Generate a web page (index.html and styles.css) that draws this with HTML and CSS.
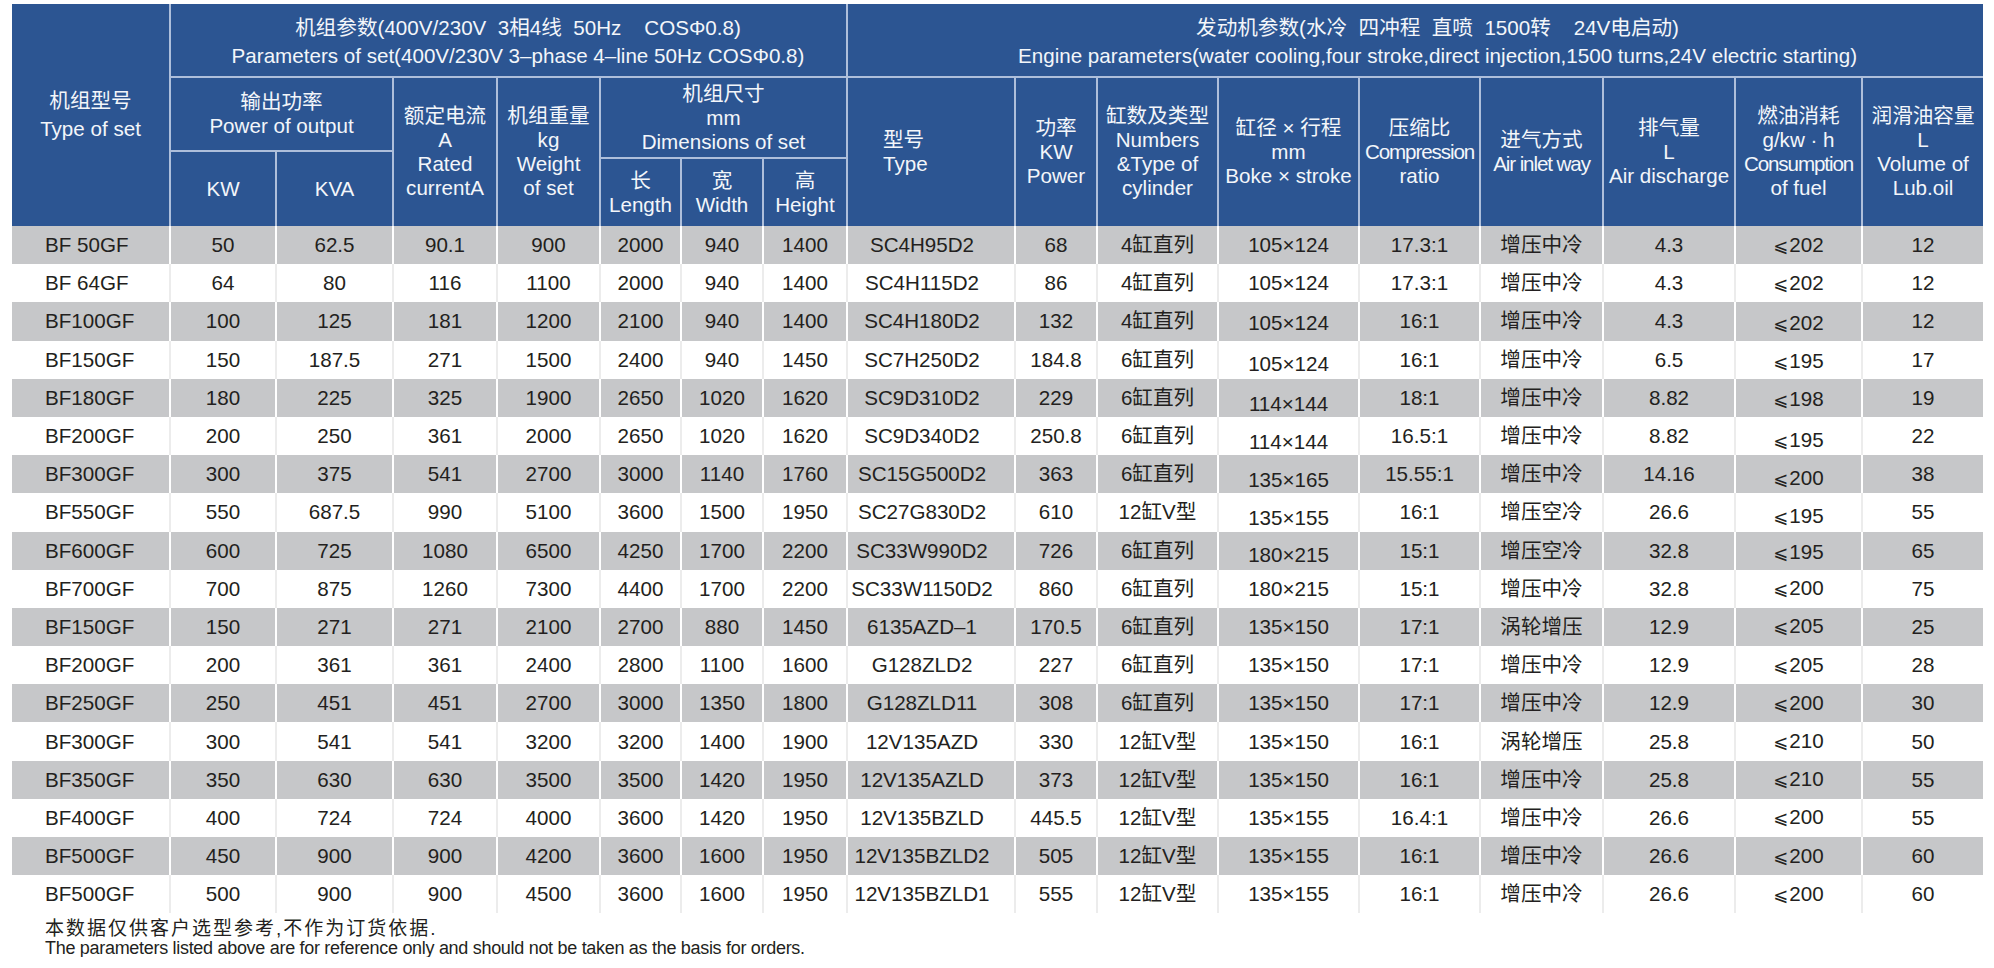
FILE: index.html
```html
<!DOCTYPE html>
<html lang="zh-CN">
<head>
<meta charset="utf-8">
<title>机组参数表</title>
<link rel="stylesheet" href="styles.css">
</head>
<body>
<div class="page">
<table class="spec">
<colgroup>
<col class="col-model"><col class="col-kw"><col class="col-kva"><col class="col-cur"><col class="col-wt"><col class="col-len"><col class="col-wid"><col class="col-hgt"><col class="col-eng"><col class="col-pow"><col class="col-cyl"><col class="col-bore"><col class="col-comp"><col class="col-air"><col class="col-disp"><col class="col-fuel"><col class="col-oil">
</colgroup>
<thead>
<tr class="h1">
<th rowspan="4" class="first">机组型号<br>Type of set</th>
<th colspan="7" class="group group-set">机组参数(400V/230V&nbsp; 3相4线&nbsp; 50Hz&nbsp;&nbsp;&nbsp; COSΦ0.8)<br>Parameters of set(400V/230V 3–phase 4–line 50Hz COSΦ0.8)</th>
<th colspan="9" class="group group-engine">发动机参数(水冷&nbsp; 四冲程&nbsp; 直喷&nbsp; 1500转&nbsp;&nbsp;&nbsp; 24V电启动)<br>Engine parameters(water cooling,four stroke,direct injection,1500 turns,24V electric starting)</th>
</tr>
<tr class="h2">
<th colspan="2">输出功率<br>Power of output</th>
<th rowspan="3">额定电流<br>A<br>Rated<br>currentA</th>
<th rowspan="3">机组重量<br>kg<br>Weight<br>of set</th>
<th colspan="3" rowspan="2">机组尺寸<br>mm<br>Dimensions of set</th>
<th rowspan="3" class="type">型号<br>Type</th>
<th rowspan="3">功率<br>KW<br>Power</th>
<th rowspan="3">缸数及类型<br>Numbers<br>&amp;Type of<br>cylinder</th>
<th rowspan="3">缸径 × 行程<br>mm<br>Boke × stroke</th>
<th rowspan="3">压缩比<br><span class="tight">Compression</span><br>ratio</th>
<th rowspan="3">进气方式<br><span class="tight">Air inlet way</span></th>
<th rowspan="3">排气量<br>L<br>Air discharge</th>
<th rowspan="3">燃油消耗<br>g/kw · h<br><span class="tight">Consumption</span><br>of fuel</th>
<th rowspan="3">润滑油容量<br>L<br>Volume of<br>Lub.oil</th>
</tr>
<tr class="h3">
<th rowspan="2">KW</th>
<th rowspan="2">KVA</th>
</tr>
<tr class="h4">
<th>长<br>Length</th>
<th>宽<br>Width</th>
<th>高<br>Height</th>
</tr>
</thead>
<tbody>
<tr><td>BF 50GF</td><td>50</td><td>62.5</td><td>90.1</td><td>900</td><td>2000</td><td>940</td><td>1400</td><td class="eng">SC4H95D2</td><td>68</td><td>4缸直列</td><td>105×124</td><td>17.3:1</td><td>增压中冷</td><td>4.3</td><td><span class="le">⩽</span>202</td><td>12</td></tr>
<tr><td>BF 64GF</td><td>64</td><td>80</td><td>116</td><td>1100</td><td>2000</td><td>940</td><td>1400</td><td class="eng">SC4H115D2</td><td>86</td><td>4缸直列</td><td>105×124</td><td>17.3:1</td><td>增压中冷</td><td>4.3</td><td><span class="le">⩽</span>202</td><td>12</td></tr>
<tr><td>BF100GF</td><td>100</td><td>125</td><td>181</td><td>1200</td><td>2100</td><td>940</td><td>1400</td><td class="eng">SC4H180D2</td><td>132</td><td>4缸直列</td><td class="dn1">105×124</td><td>16:1</td><td>增压中冷</td><td>4.3</td><td class="dn1"><span class="le">⩽</span>202</td><td>12</td></tr>
<tr><td>BF150GF</td><td>150</td><td>187.5</td><td>271</td><td>1500</td><td>2400</td><td>940</td><td>1450</td><td class="eng">SC7H250D2</td><td>184.8</td><td>6缸直列</td><td class="dn2">105×124</td><td>16:1</td><td>增压中冷</td><td>6.5</td><td class="dn1"><span class="le">⩽</span>195</td><td>17</td></tr>
<tr><td>BF180GF</td><td>180</td><td>225</td><td>325</td><td>1900</td><td>2650</td><td>1020</td><td>1620</td><td class="eng">SC9D310D2</td><td>229</td><td>6缸直列</td><td class="dn3">114×144</td><td>18:1</td><td>增压中冷</td><td>8.82</td><td class="dn1"><span class="le">⩽</span>198</td><td>19</td></tr>
<tr><td>BF200GF</td><td>200</td><td>250</td><td>361</td><td>2000</td><td>2650</td><td>1020</td><td>1620</td><td class="eng">SC9D340D2</td><td>250.8</td><td>6缸直列</td><td class="dn3">114×144</td><td>16.5:1</td><td>增压中冷</td><td>8.82</td><td class="dn2"><span class="le">⩽</span>195</td><td>22</td></tr>
<tr><td>BF300GF</td><td>300</td><td>375</td><td>541</td><td>2700</td><td>3000</td><td>1140</td><td>1760</td><td class="eng">SC15G500D2</td><td>363</td><td>6缸直列</td><td class="dn3">135×165</td><td>15.55:1</td><td>增压中冷</td><td>14.16</td><td class="dn2"><span class="le">⩽</span>200</td><td>38</td></tr>
<tr><td>BF550GF</td><td>550</td><td>687.5</td><td>990</td><td>5100</td><td>3600</td><td>1500</td><td>1950</td><td class="eng">SC27G830D2</td><td>610</td><td>12缸V型</td><td class="dn3">135×155</td><td>16:1</td><td>增压空冷</td><td>26.6</td><td class="dn2"><span class="le">⩽</span>195</td><td>55</td></tr>
<tr><td>BF600GF</td><td>600</td><td>725</td><td>1080</td><td>6500</td><td>4250</td><td>1700</td><td>2200</td><td class="eng">SC33W990D2</td><td>726</td><td>6缸直列</td><td class="dn2">180×215</td><td>15:1</td><td>增压空冷</td><td>32.8</td><td class="dn1"><span class="le">⩽</span>195</td><td>65</td></tr>
<tr><td>BF700GF</td><td>700</td><td>875</td><td>1260</td><td>7300</td><td>4400</td><td>1700</td><td>2200</td><td class="eng">SC33W1150D2</td><td>860</td><td>6缸直列</td><td>180×215</td><td>15:1</td><td>增压中冷</td><td>32.8</td><td><span class="le">⩽</span>200</td><td>75</td></tr>
<tr><td>BF150GF</td><td>150</td><td>271</td><td>271</td><td>2100</td><td>2700</td><td>880</td><td>1450</td><td class="eng">6135AZD–1</td><td>170.5</td><td>6缸直列</td><td>135×150</td><td>17:1</td><td>涡轮增压</td><td>12.9</td><td><span class="le">⩽</span>205</td><td>25</td></tr>
<tr><td>BF200GF</td><td>200</td><td>361</td><td>361</td><td>2400</td><td>2800</td><td>1100</td><td>1600</td><td class="eng">G128ZLD2</td><td>227</td><td>6缸直列</td><td>135×150</td><td>17:1</td><td>增压中冷</td><td>12.9</td><td><span class="le">⩽</span>205</td><td>28</td></tr>
<tr><td>BF250GF</td><td>250</td><td>451</td><td>451</td><td>2700</td><td>3000</td><td>1350</td><td>1800</td><td class="eng">G128ZLD11</td><td>308</td><td>6缸直列</td><td>135×150</td><td>17:1</td><td>增压中冷</td><td>12.9</td><td><span class="le">⩽</span>200</td><td>30</td></tr>
<tr><td>BF300GF</td><td>300</td><td>541</td><td>541</td><td>3200</td><td>3200</td><td>1400</td><td>1900</td><td class="eng">12V135AZD</td><td>330</td><td>12缸V型</td><td>135×150</td><td>16:1</td><td>涡轮增压</td><td>25.8</td><td><span class="le">⩽</span>210</td><td>50</td></tr>
<tr><td>BF350GF</td><td>350</td><td>630</td><td>630</td><td>3500</td><td>3500</td><td>1420</td><td>1950</td><td class="eng">12V135AZLD</td><td>373</td><td>12缸V型</td><td>135×150</td><td>16:1</td><td>增压中冷</td><td>25.8</td><td><span class="le">⩽</span>210</td><td>55</td></tr>
<tr><td>BF400GF</td><td>400</td><td>724</td><td>724</td><td>4000</td><td>3600</td><td>1420</td><td>1950</td><td class="eng">12V135BZLD</td><td>445.5</td><td>12缸V型</td><td>135×155</td><td>16.4:1</td><td>增压中冷</td><td>26.6</td><td><span class="le">⩽</span>200</td><td>55</td></tr>
<tr><td>BF500GF</td><td>450</td><td>900</td><td>900</td><td>4200</td><td>3600</td><td>1600</td><td>1950</td><td class="eng">12V135BZLD2</td><td>505</td><td>12缸V型</td><td>135×155</td><td>16:1</td><td>增压中冷</td><td>26.6</td><td><span class="le">⩽</span>200</td><td>60</td></tr>
<tr><td>BF500GF</td><td>500</td><td>900</td><td>900</td><td>4500</td><td>3600</td><td>1600</td><td>1950</td><td class="eng">12V135BZLD1</td><td>555</td><td>12缸V型</td><td>135×155</td><td>16:1</td><td>增压中冷</td><td>26.6</td><td><span class="le">⩽</span>200</td><td>60</td></tr>
</tbody>
</table>
<div class="notes">
<p class="note-cn">本数据仅供客户选型参考,不作为订货依据.</p>
<p class="note-en">The parameters listed above are for reference only and should not be taken as the basis for orders.</p>
</div>
</div>
</body>
</html>
```
FILE: styles.css
```css
html, body {
  margin: 0;
  padding: 0;
  background: #ffffff;
}

body {
  font-family: "Liberation Sans", Arial, "Noto Sans CJK SC", sans-serif;
  color: #231f20;
}

.page {
  padding: 4px 0 0 12px;
  width: 1971px;
}

.spec {
  border-collapse: separate;
  border-spacing: 0;
  table-layout: fixed;
  width: 1971px;
  font-size: 20.6px;
}

.col-model { width: 157px; }
.col-kw { width: 106px; }
.col-kva { width: 117px; }
.col-cur { width: 104px; }
.col-wt { width: 103px; }
.col-len { width: 81px; }
.col-wid { width: 82px; }
.col-hgt { width: 84px; }
.col-eng { width: 168px; }
.col-pow { width: 82px; }
.col-cyl { width: 121px; }
.col-bore { width: 141px; }
.col-comp { width: 121px; }
.col-air { width: 123px; }
.col-disp { width: 132px; }
.col-fuel { width: 127px; }
.col-oil { width: 122px; }

/* header */
.spec th {
  background: #2c5592;
  color: #f3f6fa;
  font-weight: normal;
  line-height: 24px;
  padding: 0;
  vertical-align: middle;
  text-align: center;
  white-space: nowrap;
  border-left: 2px solid #aebfdb;
}

.spec th.first {
  border-left: 0;
  line-height: 28px;
}

.spec .h2 th,
.spec .h3 th,
.spec .h4 th {
  border-top: 2px solid #aebfdb;
}

.spec .h1 { height: 72px; }
.spec .h2 { height: 74px; }
.spec .h3 { height: 7px; }
.spec .h4 { height: 69px; }

.spec th.group {
  line-height: 28px;
  padding-top: 4px;
}

.spec th.group-set {
  padding-left: 19px;
}

.spec th.group-engine {
  padding-left: 44px;
}

.spec th.type {
  text-align: left;
  padding-left: 35px;
}

.tight {
  letter-spacing: -1.1px;
}

/* body */
.spec tbody tr {
  height: 38.2px;
}

.spec td {
  padding: 0;
  text-align: center;
  vertical-align: middle;
  line-height: 22px;
  white-space: nowrap;
  border-left: 2px solid #ececec;
}

.spec td:first-child {
  border-left: 0;
  text-align: left;
  padding-left: 33px;
}

.spec tbody tr:nth-child(odd) td {
  background: #c6c7c9;
  border-left-color: #ffffff;
}

.spec td.eng {
  padding-right: 18px;
}

.spec td.dn1 { padding-top: 4px; }
.spec td.dn2 { padding-top: 8px; }
.spec td.dn3 { padding-top: 12px; }

.le {
  font-family: "DejaVu Sans", "Liberation Sans", sans-serif;
  font-size: 18px;
  margin-right: 1px;
}

/* notes */
.notes {
  padding: 5px 0 0 33px;
  color: #231f20;
}

.notes p {
  margin: 0;
  white-space: nowrap;
}

.note-cn {
  font-size: 19px;
  letter-spacing: 2px;
  line-height: 22px;
}

.note-en {
  font-size: 18px;
  letter-spacing: -0.3px;
  line-height: 17px;
}
```
